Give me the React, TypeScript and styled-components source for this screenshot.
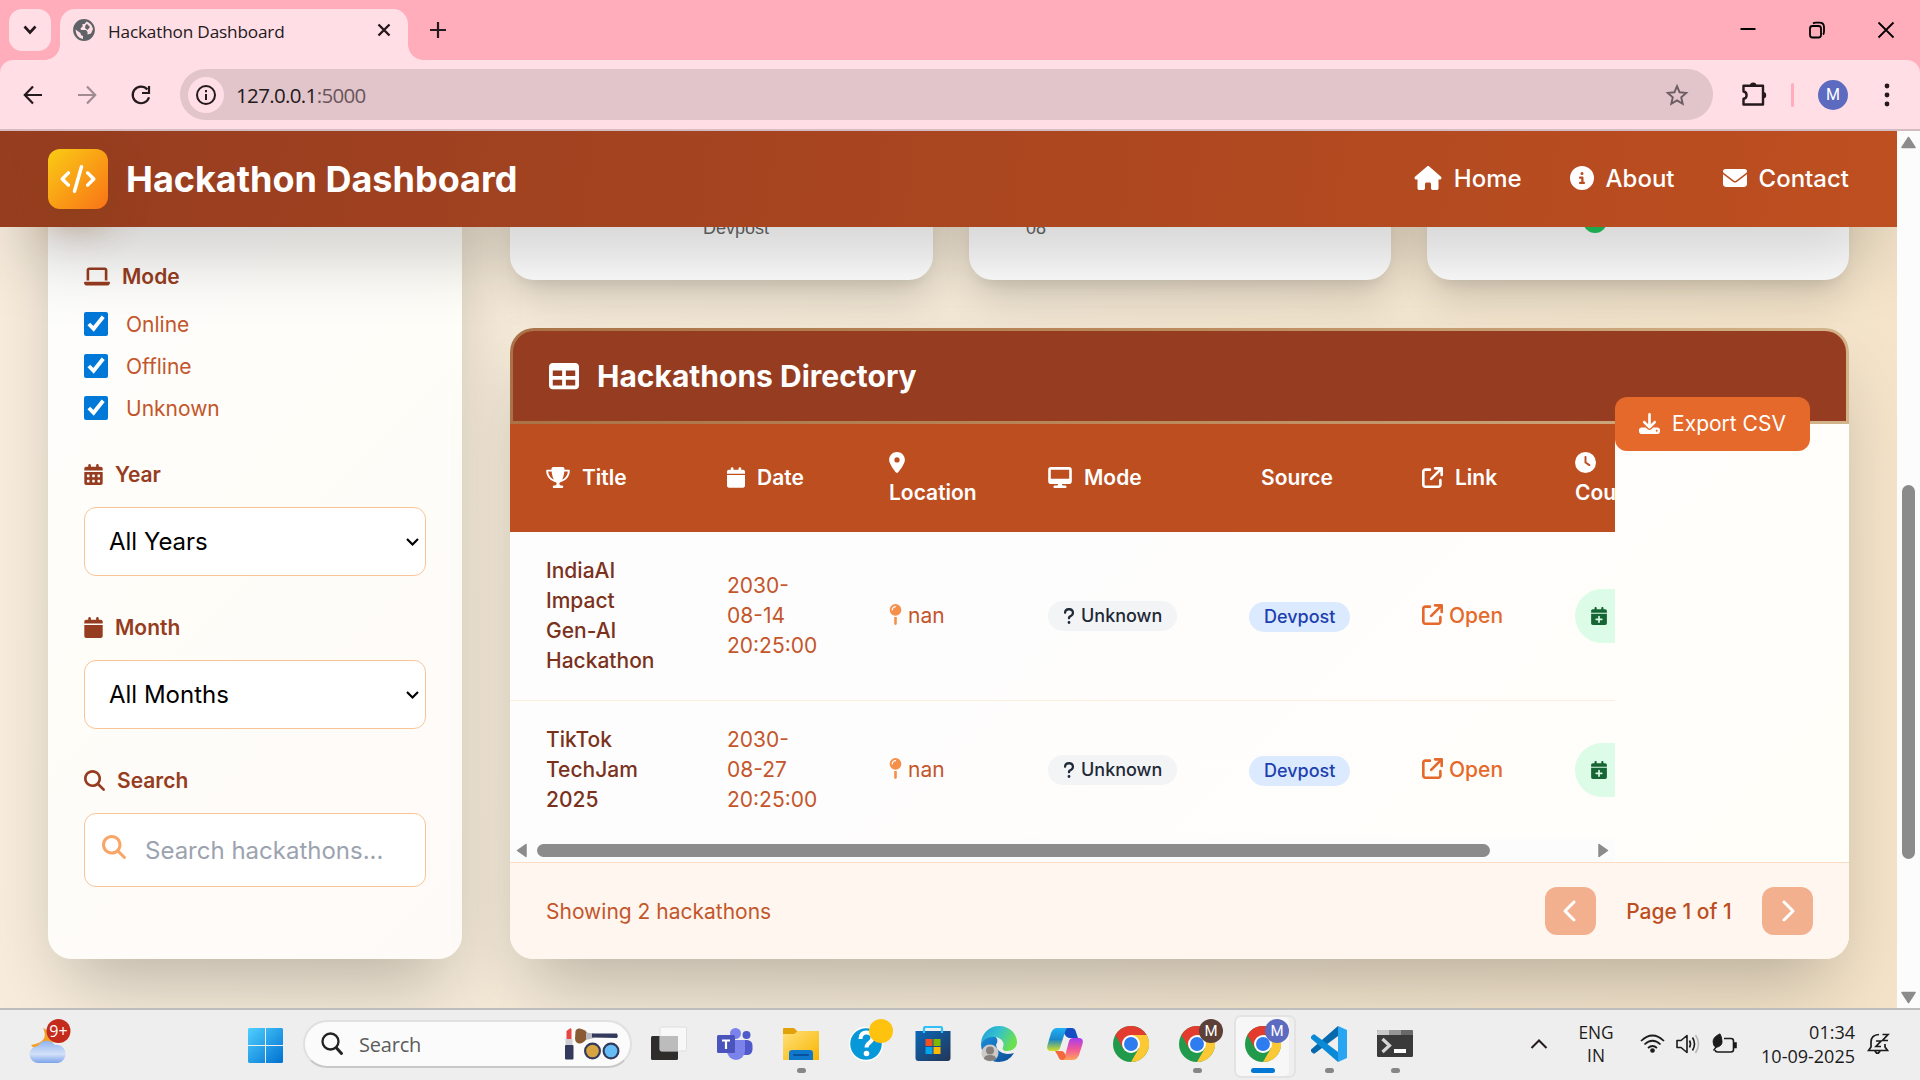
import React from "react";
import styled, { createGlobalStyle, css } from "styled-components";
import {
  FaHouse, FaCircleInfo, FaEnvelope, FaCode, FaLaptop, FaCalendarDays, FaCalendar,
  FaMagnifyingGlass, FaTrophy, FaLocationDot, FaDesktop, FaArrowUpRightFromSquare,
  FaClock, FaQuestion, FaCalendarPlus, FaMapPin, FaTable, FaDownload, FaChevronLeft, FaChevronRight,
} from "react-icons/fa6";

const ui = `"Open Sans", "Noto Sans", sans-serif`;
const rust = "#963c20";
const ember = "#bd4e20";
const flame = "#e5692b";

const Global = createGlobalStyle`
  * { box-sizing: border-box; }
  body { margin: 0; overflow: hidden; font-family: Inter, "Liberation Sans", sans-serif; }
  svg { display: block; flex: none; }
`;

const Screen = styled.div`
  width: 1920px;
  height: 1080px;
  display: flex;
  flex-direction: column;
  overflow: hidden;
`;

/* ---------- browser chrome ---------- */
const TabStrip = styled.div`
  height: 60px;
  flex: none;
  background: #ffadbb;
  display: flex;
  align-items: flex-start;
  padding: 9px 0 0 9px;
`;
const TabSearch = styled.div`
  width: 42px;
  height: 42px;
  border-radius: 13px;
  background: #ffdee5;
  display: grid;
  place-items: center;
  margin-right: 9px;
`;
const Tab = styled.div`
  position: relative;
  width: 348px;
  height: 51px;
  border-radius: 15px 15px 0 0;
  background: #ffdee5;
  display: flex;
  align-items: center;
  padding: 0 17px 9px 13px;
  &::before, &::after {
    content: "";
    position: absolute;
    bottom: 0;
    width: 15px;
    height: 15px;
  }
  &::before { left: -15px; background: radial-gradient(circle at 0 0, transparent 14.5px, #ffdee5 15px); }
  &::after { right: -15px; background: radial-gradient(circle at 100% 0, transparent 14.5px, #ffdee5 15px); }
`;
const TabTitle = styled.span`
  flex: 1;
  margin: 4px 0 0 13px;
  font: 400 17.2px/24px ${ui};
  letter-spacing: -0.17px;
  color: #24191c;
  white-space: nowrap;
`;
const NewTab = styled.div`
  margin: 12px 0 0 21px;
`;
const WindowControls = styled.div`
  margin: 12px 25px 0 auto;
  display: flex;
  gap: 51px;
`;
const ToolbarBack = styled.div`
  background: #ffadbb;
  flex: none;
`;
const Toolbar = styled.div`
  height: 71px;
  background: #ffdee5;
  border-radius: 13px 13px 0 0;
  border-bottom: 2px solid #d4bcc3;
  display: flex;
  align-items: center;
  padding: 0 24px 0 21px;
`;
const NavButtons = styled.div`
  display: flex;
  gap: 30px;
  width: 159px;
`;
const Address = styled.div`
  width: 1533px;
  height: 51px;
  border-radius: 26px;
  background: #e1c5ca;
  display: flex;
  align-items: center;
  padding: 0 24px 0 8px;
`;
const SiteInfo = styled.div`
  width: 36px;
  height: 36px;
  border-radius: 50%;
  background: #ffdee5;
  display: grid;
  place-items: center;
`;
const Url = styled.div`
  flex: 1;
  margin-left: 12px;
  font: 400 20.5px/28px ${ui};
  letter-spacing: -0.65px;
  color: #24191c;
  span { color: #6a555b; }
`;
const ToolbarEnd = styled.div`
  flex: 1;
  display: flex;
  align-items: center;
  padding-left: 28px;
`;
const Separator = styled.i`
  width: 3px;
  height: 24px;
  border-radius: 2px;
  background: #ffadbb;
  margin: 0 24px 0 23px;
`;
const Avatar = styled.div`
  width: 30px;
  height: 30px;
  border-radius: 50%;
  background: #5c6bc0;
  color: #fff;
  font: 400 16px/30px Roboto, sans-serif;
  text-align: center;
  margin-right: 36px;
`;

/* ---------- page ---------- */
const Body = styled.div`
  height: 877px;
  flex: none;
  display: flex;
`;
const Viewport = styled.div`
  width: 1897px;
  overflow: hidden;
  background: linear-gradient(100deg, #f9eede 0%, #f3e8d5 50%, #f4e3c8 100%);
`;
const Header = styled.header`
  position: relative;
  z-index: 2;
  height: 96px;
  padding: 0 48px;
  display: flex;
  align-items: center;
  justify-content: space-between;
  background: linear-gradient(97deg, #963d20 0%, #be4f20 100%);
  box-shadow: 0 37.5px 75px -18px rgba(0, 0, 0, 0.25);
`;
const Brand = styled.div`
  display: flex;
  align-items: center;
  gap: 18px;
  font-size: 36px;
  font-weight: 700;
  line-height: 48px;
  color: #fff;
`;
const LogoBox = styled.div`
  width: 60px;
  height: 60px;
  border-radius: 12px;
  display: grid;
  place-items: center;
  background: linear-gradient(135deg, #facc15, #f97316);
  box-shadow: 0 15px 37px rgba(133, 66, 20, 0.45);
`;
const Nav = styled.nav`
  display: flex;
  gap: 48px;
  margin-bottom: 2px;
`;
const NavItem = styled.a`
  display: flex;
  align-items: center;
  gap: 12px;
  font-size: 24px;
  font-weight: 500;
  color: #fff;
`;
const Content = styled.main`
  display: flex;
  gap: 48px;
  margin: -60px 48px 0;
  align-items: stretch;
  height: 792px;
`;
const deepShadow = css`box-shadow: 0 37.5px 75px -18px rgba(0, 0, 0, 0.25);`;
const Sidebar = styled.aside`
  width: 414px;
  flex: none;
  border-radius: 24px;
  padding: 94px 36px 0;
  background: linear-gradient(135deg, #fdfdfd, #fefdf8 45%, #fefaf8);
  ${deepShadow}
`;
const Field = styled.section`
  margin-bottom: 36px;
`;
const Label = styled.h3`
  margin: 0 0 18px;
  height: 30px;
  display: flex;
  align-items: center;
  gap: 12px;
  font-size: 21px;
  font-weight: 600;
  color: ${rust};
`;
const Check = styled.label`
  display: flex;
  align-items: center;
  gap: 18px;
  height: 30px;
  margin-bottom: 12px;
  font-size: 21px;
  color: #c4562b;
  input { width: 24px; height: 24px; margin: 0; accent-color: #0078d7; }
`;
const Select = styled.div`
  height: 69px;
  border: 1px solid #f9c596;
  border-radius: 12px;
  background: #fff;
  display: flex;
  align-items: center;
  justify-content: space-between;
  padding: 0 5px 0 24px;
  font-size: 24px;
  color: #000;
`;
const SearchInput = styled.div`
  height: 74px;
  border: 1px solid #f9c596;
  border-radius: 12px;
  background: #fff;
  display: flex;
  align-items: center;
  gap: 19px;
  padding-left: 17px;
  font-size: 24px;
  color: #9ca3af;
  svg { color: #f9a566; margin-bottom: 7px; }
`;
const Column = styled.div`
  width: 1339px;
  display: flex;
  flex-direction: column;
  gap: 48px;
`;
const Stats = styled.div`
  display: grid;
  grid-template-columns: 423px 422px 422px;
  gap: 36px;
  height: 113px;
  font: 18px/20px "Liberation Sans", Arial, sans-serif;
  color: #666;
`;
const Stat = styled.div<{ $indent: number }>`
  border-radius: 24px;
  background: #fff;
  padding: 51px 0 0 ${(p) => p.$indent}px;
  box-shadow: 0 30px 37px -8px rgba(0, 0, 0, 0.1), 0 12px 15px -9px rgba(0, 0, 0, 0.1);
`;
const GreenDot = styled.i`
  display: block;
  width: 24px;
  height: 24px;
  border-radius: 50%;
  background: #22c55e;
  margin-top: -9px;
`;
const Directory = styled.section`
  flex: 1;
  border-radius: 24px;
  display: flex;
  flex-direction: column;
  background: linear-gradient(135deg, #fefdfd 40%, #fffef8);
  ${deepShadow}
`;
const DirectoryFrame = styled.div`
  position: relative;
  height: 96px;
  padding: 3px;
  border-radius: 24px 24px 0 0;
  background: linear-gradient(90deg, #a97347, #bb8a5d 50%, #d3b48a);
`;
const DirectoryHead = styled.div`
  height: 90px;
  border-radius: 21px 21px 0 0;
  background: ${rust};
  display: flex;
  align-items: center;
  gap: 18px;
  padding: 0 0 0 36px;
  color: #fff;
  font-size: 30px;
  font-weight: 700;
`;
const ExportButton = styled.button`
  position: absolute;
  right: 39px;
  top: 69px;
  width: 195px;
  height: 54px;
  border: 0;
  border-radius: 12px;
  background: ${flame};
  color: #fff;
  font: 400 21px Inter, sans-serif;
  display: flex;
  align-items: center;
  justify-content: center;
  gap: 12px;
  padding: 0 6px 1px;
`;
const TableWrap = styled.div`
  width: 1105px;
  height: 438px;
  overflow: hidden;
`;
const Table = styled.table`
  width: 1230px;
  height: 415px;
  table-layout: fixed;
  border-collapse: collapse;
  font-size: 21px;
  line-height: 30px;
  color: #c4562b;
  svg { display: inline-block; vertical-align: -2.6px; }
`;
const Th = styled.th`
  background: ${ember};
  color: #fff;
  text-align: left;
  font-weight: 600;
  height: 108px;
  padding: 24px 36px;
  svg { margin-right: 12px; }
`;
const Tr = styled.tr<{ $h: number }>`
  height: ${(p) => p.$h}px;
  & + & { border-top: 1.5px solid #fdeedd; }
`;
const Td = styled.td<{ $title?: boolean }>`
  padding: 0 0 0 36px;
  white-space: nowrap;
  ${(p) => p.$title && css`color: #7a321c; font-weight: 500;`}
`;
const Line = styled.span`
  display: block;
`;
const Pill = styled.span<{ $tone: "gray" | "blue" }>`
  display: inline-flex;
  align-items: center;
  vertical-align: middle;
  height: 30px;
  border-radius: 15px;
  padding: 0 15px;
  font-size: 18px;
  font-weight: 500;
  ${(p) => p.$tone === "gray"
    ? css`background: #f3f4f6; color: #1f2937; svg { margin-right: 6px; }`
    : css`background: #dbeafe; color: #1e40af; margin-top: 2px;`}
`;
const OpenLink = styled.a`
  color: ${flame};
  font-weight: 500;
  svg { margin-right: 6px; }
`;
const CountPill = styled.span`
  display: flex;
  align-items: center;
  gap: 12px;
  width: 150px;
  height: 54px;
  border-radius: 27px;
  padding-left: 15px;
  background: #dcfce7;
  color: #166534;
`;
const HScroll = styled.div`
  height: 23px;
  display: flex;
  align-items: center;
  padding: 0 6px 0 6px;
  background: #fcfcfd;
  i { width: 953px; height: 13px; border-radius: 7px; background: #8b8b8b; margin: 0 auto 0 9px; }
`;
const Footer = styled.footer`
  flex: 1;
  border-top: 1.5px solid #fbdcc3;
  border-radius: 0 0 24px 24px;
  background: #fff6f0;
  display: flex;
  align-items: center;
  justify-content: space-between;
  padding: 0 36px;
  font-size: 21px;
  color: #c4562b;
`;
const Pager = styled.div`
  display: flex;
  align-items: center;
  justify-content: space-between;
  width: 268px;
  font-weight: 500;
  color: ${ember};
`;
const PageButton = styled.span`
  width: 51px;
  height: 48px;
  border-radius: 12px;
  background: #f2b08e;
  color: #fff;
  display: grid;
  place-items: center;
`;
const VScroll = styled.div`
  width: 23px;
  background: #fcfcfc;
  display: flex;
  flex-direction: column;
  align-items: center;
  padding: 5px 0 4px;
  i { width: 13px; height: 374px; border-radius: 7px; background: #8b8b8b; margin: 336px 0 auto; }
`;

/* ---------- taskbar ---------- */
const Taskbar = styled.div`
  height: 72px;
  flex: none;
  border-top: 2px solid #bdbdbf;
  background: #eeeeee;
  display: flex;
  align-items: center;
  font-family: ${ui};
  color: #1b1b1b;
`;
const Weather = styled.div`
  width: 248px;
  padding: 0 0 8px 28px;
`;
const TaskSearch = styled.div`
  width: 329px;
  height: 48px;
  margin: 0 4px 2px 20px;
  border: 2px solid #e0e0e0;
  border-bottom-color: #c8c8c8;
  border-radius: 24px;
  background: #fbfbfb;
  display: flex;
  align-items: center;
  padding: 0 10px 0 15px;
  font-size: 20px;
  color: #5c5c5c;
  span { margin-left: 15px; flex: 1; letter-spacing: -0.2px; }
`;
const TaskItem = styled.div<{ $active?: boolean }>`
  position: relative;
  width: 66px;
  height: 70px;
  display: grid;
  place-items: center;
  padding-bottom: 2px;
  ${(p) => p.$active && css`
    &::before {
      content: "";
      position: absolute;
      left: 4px;
      top: 5px;
      width: 58px;
      height: 59px;
      border: 2px solid #e3e3e3;
      border-radius: 7px;
      background: #f7f7f7;
      box-shadow: inset -5px 0 0 #efefef;
    }
  `}
  svg { position: relative; }
`;
const Running = styled.i<{ $active?: boolean }>`
  position: absolute;
  bottom: 7px;
  left: ${(p) => (p.$active ? 21 : 28.5)}px;
  width: ${(p) => (p.$active ? 24 : 9)}px;
  height: 5px;
  border-radius: 3px;
  background: ${(p) => (p.$active ? "#0078d4" : "#868686")};
`;
const Badge = styled.b<{ $color: string }>`
  position: absolute;
  right: 7px;
  top: 9px;
  width: 24px;
  height: 24px;
  border-radius: 50%;
  background: ${(p) => p.$color};
  color: #fff;
  font: 400 15px/24px Roboto, sans-serif;
  text-align: center;
`;
const Tray = styled.div`
  margin: 0 0 2px auto;
  padding-right: 30px;
  display: flex;
  align-items: center;
`;
const Lang = styled.div`
  width: 60px;
  margin: 0 14px 0 18px;
  text-align: center;
  font-size: 17.3px;
  line-height: 23px;
`;
const Clock = styled.div`
  width: 118px;
  text-align: right;
  margin-right: 12px;
  font-size: 18px;
  line-height: 24px;
  white-space: nowrap;
`;
const TrayIcons = styled.div`
  display: flex;
  align-items: center;
  gap: 11px;
`;

const Stroke = ({ w, h, d, c = "#24191c", s = 2.2 }: { w: number; h: number; d: string; c?: string; s?: number }) => (
  <svg width={w} height={h} viewBox={`0 0 ${w} ${h}`} fill="none" stroke={c} strokeWidth={s}>
    <path d={d} />
  </svg>
);

const Arrow = ({ dir }: { dir: "up" | "down" | "left" | "right" }) => {
  const vertical = dir === "up" || dir === "down";
  const pts = { up: "7.5,1.5 14,11.5 1,11.5", down: "7.5,11.5 14,1.5 1,1.5", left: "1.5,7.5 10,1.5 10,13.5", right: "10.5,7.5 2,1.5 2,13.5" }[dir];
  return (
    <svg width={vertical ? 15 : 12} height={vertical ? 13 : 15}>
      <polygon points={pts} fill="#8b8b8b" stroke="#8b8b8b" strokeWidth="1.5" strokeLinejoin="round" />
    </svg>
  );
};

const ChromeIcon = () => (
  <svg width="36" height="36" viewBox="0 0 48 48">
    <circle cx="24" cy="24" r="24" fill="#229a4c" />
    <path d="M34.4 30 24 48A24 24 0 0 0 44.8 12H24Z" fill="#fcc934" />
    <path d="M3.2 12A24 24 0 0 1 44.8 12H24L13.600 30Z" fill="#e33b2e" />
    <circle cx="24" cy="24" r="12" fill="#fff" />
    <circle cx="24" cy="24" r="9.3" fill="#2f7cf0" />
  </svg>
);

const rows = [
  { title: ["IndiaAI", "Impact", "Gen-AI", "Hackathon"], date: ["2030-", "08-14", "20:25:00"], h: 168 },
  { title: ["TikTok", "TechJam", "2025"], date: ["2030-", "08-27", "20:25:00"], h: 139 },
];

const Browser = () => (
  <>
    <TabStrip>
      <TabSearch><Stroke w={14} h={10} d="M1.5 1.5 7 7.5l5.500-6" s={2.6} /></TabSearch>
      <Tab>
        <svg width="22" height="22" viewBox="0 0 22 22">
          <circle cx="11" cy="11" r="9.8" fill="#5f6368" stroke="#5f6368" strokeWidth="2.2" />
          <path d="M13.500 2.500 11.500 5H9.500v2.500L7.500 9.500 8 11h5l1.500 2v2.500L18 14.500 20 10Q19 4.500 13.500 2.500Z" fill="#ffdee5" />
          <path d="M13.800 4.800 17 8l-2.500 3-2.500-2 .5-2.500Z" fill="#5f6368" />
          <path d="M2.500 10.500 7.500 14l.5 2 2 1v3Q3 19 2.500 10.500Z" fill="#ffdee5" />
        </svg>
        <TabTitle>Hackathon Dashboard</TabTitle>
        <Stroke w={14} h={14} d="M1.500 1.500l11 11M12.500 1.500l-11 11" s={2.4} />
      </Tab>
      <NewTab><Stroke w={18} h={18} d="M9 1v16M1 9h16" s={2.2} /></NewTab>
      <WindowControls>
        <Stroke w={18} h={18} d="M1.500 8h15" c="#000" s={2} />
        <svg width="18" height="18" viewBox="0 0 18 18" fill="none" stroke="#000" strokeWidth="1.8">
          <rect x="2" y="5" width="11" height="11.500" rx="2.500" />
          <path d="M5 2.500Q6 1.600 8 1.600h3.500Q16 1.600 16 6v4.500Q16 12.500 15 13.500" />
        </svg>
        <Stroke w={18} h={18} d="M1.500 1.500l15 15M16.500 1.500l-15 15" c="#000" s={1.8} />
      </WindowControls>
    </TabStrip>
    <ToolbarBack>
      <Toolbar>
        <NavButtons>
          <Stroke w={24} h={24} d="M21 12H4.500M12 3.500 3.800 12l8.200 8.500" />
          <Stroke w={24} h={24} d="M3 12h16.500M12 3.500l8.200 8.500-8.200 8.500" c="#a08b91" />
          <Stroke w={24} h={24} d="M20 14.200A8.300 8.300 0 1 1 18.300 6.500M20 3v7h-7" />
        </NavButtons>
        <Address>
          <SiteInfo>
            <svg width="22" height="22" viewBox="0 0 22 22" fill="none" stroke="#24191c" strokeWidth="2">
              <circle cx="11" cy="11" r="9" /><path d="M11 10v6M11 6v2.200" />
            </svg>
          </SiteInfo>
          <Url>127.0.0.1<span>:5000</span></Url>
          <svg width="24" height="24" viewBox="0 0 24 24" fill="none" stroke="#6b5d61" strokeWidth="1.900">
            <path d="m12 3.200 2.600 6.100 6.600.6-5 4.400 1.500 6.500-5.700-3.400-5.700 3.400 1.500-6.500-5-4.400 6.600-.6Z" />
          </svg>
        </Address>
        <ToolbarEnd>
          <svg width="27" height="27" viewBox="0 0 27 27" fill="none" stroke="#24191c" strokeWidth="2.400">
            <path d="M2.500 4.700H22V23.500H2.500v-5.700a3.700 3.700 0 0 0 0-7.300Z" strokeLinejoin="round" />
            <path d="M9 4.700a3.200 3.200 0 0 1 6.400 0ZM22 11a3.200 3.200 0 0 1 0 6.400Z" fill="#24191c" stroke="none" />
          </svg>
          <Separator />
          <Avatar>M</Avatar>
          <svg width="6" height="26" fill="#24191c"><circle cx="3" cy="4" r="2.400" /><circle cx="3" cy="13" r="2.400" /><circle cx="3" cy="22" r="2.400" /></svg>
        </ToolbarEnd>
      </Toolbar>
    </ToolbarBack>
  </>
);

const DirectoryTable = () => (
  <TableWrap>
    <Table>
      <colgroup>
        {[181, 162, 159, 201, 173, 153, 201].map((w, i) => <col key={i} width={w} />)}
      </colgroup>
      <thead>
        <tr>
          <Th><FaTrophy size={21} style={{ width: 24 }} />Title</Th>
          <Th><FaCalendar size={21} style={{ width: 18 }} />Date</Th>
          <Th><FaLocationDot size={21} style={{ width: 16 }} /> Location</Th>
          <Th><FaDesktop size={21} style={{ width: 24 }} />Mode</Th>
          <Th><span style={{ paddingLeft: 12 }}>Source</span></Th>
          <Th><FaArrowUpRightFromSquare size={21} />Link</Th>
          <Th><FaClock size={21} /> Countdown</Th>
        </tr>
      </thead>
      <tbody>
        {rows.map((r) => (
          <Tr key={r.title[0]} $h={r.h}>
            <Td $title>{r.title.map((t) => <Line key={t}>{t}</Line>)}</Td>
            <Td>{r.date.map((t) => <Line key={t}>{t}</Line>)}</Td>
            <Td><FaMapPin size={21} color="#f58f4a" style={{ width: 13, marginRight: 6 }} />nan</Td>
            <Td><Pill $tone="gray"><FaQuestion size={18} style={{ width: 12 }} />Unknown</Pill></Td>
            <Td><Pill $tone="blue">Devpost</Pill></Td>
            <Td><OpenLink><FaArrowUpRightFromSquare size={21} />Open</OpenLink></Td>
            <Td><CountPill><FaCalendarPlus size={18} /></CountPill></Td>
          </Tr>
        ))}
      </tbody>
    </Table>
    <HScroll><Arrow dir="left" /><i /><Arrow dir="right" /></HScroll>
  </TableWrap>
);

const SelectChevron = () => <Stroke w={15} h={10} d="M2 2l5.500 5.500L13 2" c="#000" s={2.200} />;

const Page = () => (
  <Body>
    <Viewport>
      <Header>
        <Brand>
          <LogoBox><FaCode size={28} style={{ width: 36 }} /></LogoBox>
          Hackathon Dashboard
        </Brand>
        <Nav>
          <NavItem><FaHouse size={24} style={{ width: 28 }} />Home</NavItem>
          <NavItem><FaCircleInfo size={24} />About</NavItem>
          <NavItem><FaEnvelope size={24} />Contact</NavItem>
        </Nav>
      </Header>
      <Content>
        <Sidebar>
          <Field>
            <Label><FaLaptop size={21} style={{ width: 26 }} />Mode</Label>
            {["Online", "Offline", "Unknown"].map((m) => (
              <Check key={m}><input type="checkbox" defaultChecked />{m}</Check>
            ))}
          </Field>
          <Field>
            <Label><FaCalendarDays size={21} style={{ width: 19 }} />Year</Label>
            <Select>All Years<SelectChevron /></Select>
          </Field>
          <Field>
            <Label><FaCalendar size={21} style={{ width: 19 }} />Month</Label>
            <Select>All Months<SelectChevron /></Select>
          </Field>
          <Field>
            <Label><FaMagnifyingGlass size={21} />Search</Label>
            <SearchInput><FaMagnifyingGlass size={24} />Search hackathons...</SearchInput>
          </Field>
        </Sidebar>
        <Column>
          <Stats>
            <Stat $indent={193}>Devpost</Stat>
            <Stat $indent={57}>08</Stat>
            <Stat $indent={156}><GreenDot /></Stat>
          </Stats>
          <Directory>
            <DirectoryFrame>
              <DirectoryHead><FaTable size={30} />Hackathons Directory</DirectoryHead>
              <ExportButton><FaDownload size={21} />Export CSV</ExportButton>
            </DirectoryFrame>
            <DirectoryTable />
            <Footer>
              <span>Showing 2 hackathons</span>
              <Pager>
                <PageButton><FaChevronLeft size={24} /></PageButton>
                Page 1 of 1
                <PageButton><FaChevronRight size={24} /></PageButton>
              </Pager>
            </Footer>
          </Directory>
        </Column>
      </Content>
    </Viewport>
    <VScroll><Arrow dir="up" /><i /><Arrow dir="down" /></VScroll>
  </Body>
);

const Bar = () => (
  <Taskbar>
    <Weather>
      <svg width="46" height="46" viewBox="0 0 46 46">
        <defs>
          <linearGradient id="cloud" x2="0" y2="1"><stop stopColor="#8fb4f0" /><stop offset=".6" stopColor="#d3e1f8" /><stop offset="1" stopColor="#7ca3ea" /></linearGradient>
        </defs>
        <path d="M15 10q7 14-12 17 3 5 12 5l10-8Q22 12 15 10Z" fill="#f4a024" />
        <path d="M11 45a9 8.500 0 0 1-1-17 10 10 0 0 1 17-1 9 9 0 0 1 3 18Z" fill="url(#cloud)" />
        <circle cx="30.500" cy="13" r="12" fill="#c42b1c" />
        <text x="30.500" y="18.500" fontSize="16" textAnchor="middle" fill="#fff" fontFamily="Open Sans">9+</text>
      </svg>
    </Weather>
    <svg width="35" height="35" viewBox="0 0 35 35">
      <defs><linearGradient id="win" x2="1" y2="1"><stop stopColor="#4fd0ff" /><stop offset="1" stopColor="#0070d0" /></linearGradient></defs>
      <path d="M1 0h16v17H0V1Zm17 0h16l1 1v16H18ZM0 18h17v17H1l-1-1Zm18 0h17v16l-1 1H18Z" fill="url(#win)" />
    </svg>
    <TaskSearch>
      <svg width="24" height="26" viewBox="0 0 24 26" fill="none" stroke="#222" strokeLinecap="round">
        <circle cx="10.500" cy="10.500" r="8" strokeWidth="2.300" /><path d="m16.500 17 5 5.500" strokeWidth="3" />
      </svg>
      <span>Search</span>
      <svg width="57" height="34" viewBox="0 0 57 34">
        <path d="M3.500 13V4l4-3 1 1.500V13Z" fill="#e84545" /><rect x="2.500" y="12" width="7" height="8" fill="#d0cdd4" /><rect x="2" y="18" width="8.500" height="14.500" rx="1" fill="#343a5c" />
        <path d="M12.500 4q1-3 4-2.500 6 1 8 5v4q-3 5-7 6-5 .5-5.500-5Z" fill="#8a5a34" /><path d="m23 5.500 8 1v4.500l-8 2Z" fill="#b9b9c4" /><path d="M29 6.500 54 6.500q1.500 2 0 4.500l-25-.5Z" fill="#343a5c" />
        <circle cx="29.500" cy="24" r="8.500" fill="#343a5c" /><circle cx="29.500" cy="24" r="6.300" fill="#d7a440" /><circle cx="48" cy="24" r="8.500" fill="#343a5c" /><circle cx="48" cy="24" r="6.300" fill="#66bdf5" />
      </svg>
    </TaskSearch>
    <TaskItem>
      <svg width="36" height="36" viewBox="0 0 36 36"><rect x="0" y="10" width="27" height="24" rx="1.500" fill="#2e2d2c" /><rect x="9" y="1" width="26.500" height="24" rx="1.500" fill="#f8f8f8" stroke="#dedede" /><path d="M9 10h18v15H9Z" fill="#bcbcbc" /></svg>
    </TaskItem>
    <TaskItem>
      <svg width="36" height="34" viewBox="0 0 36 34">
        <circle cx="29.500" cy="8" r="4" fill="#5059c9" /><rect x="23" y="13" width="12.500" height="15" rx="5.500" fill="#5059c9" />
        <circle cx="18.500" cy="6.500" r="5.500" fill="#7b83eb" /><path d="M10 13h18v11a9 9 0 0 1-18 0Z" fill="#7b83eb" />
        <rect y="8" width="18" height="18" rx="1.500" fill="#4b53bc" /><path d="M5 13.500h8M9 13.500V22" stroke="#fff" strokeWidth="2.200" />
      </svg>
    </TaskItem>
    <TaskItem>
      <svg width="36" height="34" viewBox="0 0 36 34">
        <defs><linearGradient id="fold" x2="1" y2="1"><stop stopColor="#ffe07a" /><stop offset="1" stopColor="#f8b500" /></linearGradient></defs>
        <path d="M0 2q0-1 1-1h10l4 4H36v5H0Z" fill="#e2a108" /><path d="M0 7h11l4-3h21v29H0Z" fill="url(#fold)" /><path d="M6 33v-7q0-3 3-3h18q3 0 3 3v7Z" fill="#0e79cc" /><path d="M11 28h14" stroke="#07509c" strokeWidth="2" strokeLinecap="round" />
      </svg>
      <Running />
    </TaskItem>
    <TaskItem>
      <svg width="36" height="36" viewBox="0 0 36 36"><circle cx="17" cy="18" r="16.500" fill="#0698d8" stroke="#fff" strokeWidth="1.500" /><path d="M11.500 13q0-6.500 6-6.500t6 5.500c0 4.500-6 4.500-6 9.500" fill="none" stroke="#fff" strokeWidth="4" /><circle cx="17.500" cy="27.500" r="2.800" fill="#fff" /></svg>
      <Badge $color="#fec20f" />
    </TaskItem>
    <TaskItem>
      <svg width="36" height="36" viewBox="0 0 36 36">
        <defs><linearGradient id="store" x2="1" y2="1"><stop stopColor="#0967b8" /><stop offset="1" stopColor="#243557" /></linearGradient></defs>
        <path d="M9 8V2.500Q9 1 10.500 1h15Q27 1 27 2.500V8" fill="none" stroke="#2fc0f5" strokeWidth="2.200" />
        <path d="M.5 5h35v27q0 3-3 3h-29q-3 0-3-3Z" fill="url(#store)" /><path d="M9 5v2M27 5v2" stroke="#2fc0f5" strokeWidth="2.200" />
        <path d="M10.500 13h7v7h-7Z" fill="#f25022" /><path d="M18.500 13h7v7h-7Z" fill="#7fba00" /><path d="M10.500 21h7v7h-7Z" fill="#00a4ef" /><path d="M18.500 21h7v7h-7Z" fill="#ffb900" />
      </svg>
    </TaskItem>
    <TaskItem>
      <svg width="36" height="36" viewBox="0 0 36 36">
        <defs>
          <linearGradient id="edgeA" x2="1" y2=".4"><stop stopColor="#1f9ad9" /><stop offset=".5" stopColor="#35c1cf" /><stop offset="1" stopColor="#6be04f" /></linearGradient>
          <linearGradient id="edgeB" x2="1" y2="1"><stop stopColor="#1b8fdd" /><stop offset="1" stopColor="#0c4a94" /></linearGradient>
        </defs>
        <path d="M0 18Q2 8 12 10q7 2 3 9 1 8 11 9 4 0 7-1a18 18 0 0 1-15 9A18 18 0 0 1 0 18Z" fill="url(#edgeB)" />
        <path d="M0 18A18 18 0 0 1 18 0C29 0 36 8 36 16c0 6-5 9-10 9-4 0-5-2-4-4 2-4-1-9-8-10Q4 10 0 18Z" fill="url(#edgeA)" />
        <circle cx="9" cy="27" r="8.500" fill="#cdcac8" /><circle cx="9" cy="24.500" r="4" fill="#85807d" /><path d="M3 33q0-4 6-4t6 4q-6 4-12 0Z" fill="#85807d" />
      </svg>
    </TaskItem>
    <TaskItem>
      <svg width="36" height="34" viewBox="0 0 36 34">
        <defs>
          <linearGradient id="copA" x2="0" y2="1"><stop stopColor="#1fb0f5" /><stop offset=".5" stopColor="#1a88c8" /><stop offset="1" stopColor="#d5e021" /></linearGradient>
          <linearGradient id="copB" x2="0" y2="1"><stop stopColor="#a83df0" /><stop offset=".5" stopColor="#f0559a" /><stop offset="1" stopColor="#ffa45a" /></linearGradient>
        </defs>
        <path d="M16 1h9q3 0 4 4l2 6h-8q-4 0-6-5Z" fill="#164fc4" />
        <path d="M10 1h11q-2 0-3 4l-5 16q-1 3-4 3H4q-5 0-3.500-6L4 6q2-5 6-5Z" fill="url(#copA)" />
        <path d="M26 33H14q3 0 4-4l4-15q1-3 4-3h6q5 0 3.500 6L32 28q-2 5-6 5Z" fill="url(#copB)" />
        <path d="M8 24h6q3 0 4 3l1 2q-1 4-4 4-3 0-4-4Z" fill="#f26a3c" />
      </svg>
    </TaskItem>
    <TaskItem><ChromeIcon /></TaskItem>
    <TaskItem><ChromeIcon /><Badge $color="#5d4037">M</Badge><Running /></TaskItem>
    <TaskItem $active><ChromeIcon /><Badge $color="#5c6bc0">M</Badge><Running $active /></TaskItem>
    <TaskItem>
      <svg width="36" height="36" viewBox="0 0 36 36">
        <path d="M27 0 0 23.500q-.5 1.500.5 2.500L2 27.300q1 .7 2 0L27 10Z" fill="#0669ac" />
        <path d="M27 36 0 12.500q-.5-1.500.5-2.500L2 8.700q1-.7 2 0L27 26Z" fill="#0a8ad6" />
        <path d="M27 0 36 4v28l-9 4Z" fill="#27a5f3" />
      </svg>
      <Running />
    </TaskItem>
    <TaskItem>
      <svg width="36" height="28" viewBox="0 0 36 28"><rect width="36" height="27" rx="1.500" fill="#3a3a3a" /><path d="M0 5V1.500Q0 0 1.500 0H12v5Z" fill="#c8c8c8" /><path d="M12 0h12v5H12Z" fill="#969696" /><path d="M24 0h10.500Q36 0 36 1.500V5H24Z" fill="#686868" /><path d="m5.500 9 7 6.500-7 6.500" fill="none" stroke="#d6d6d6" strokeWidth="3.200" /><path d="M17 21h12" stroke="#fff" strokeWidth="4" /></svg>
      <Running />
    </TaskItem>
    <Tray>
      <Stroke w={18} h={12} d="M1.500 10 9 2.500l7.500 7.500" s={2} />
      <Lang>ENG<br />IN</Lang>
      <TrayIcons>
        <svg width="25" height="20" viewBox="0 0 25 20" fill="none" stroke="#1b1b1b" strokeWidth="1.700">
          <path d="M1 7q11.500-11 23 0M4.500 10.500q8-7.500 16 0M8 14q4.500-4 9 0" /><circle cx="12.500" cy="16.500" r="1.500" fill="#1b1b1b" />
        </svg>
        <svg width="25" height="22" viewBox="0 0 25 22" fill="none" stroke="#1b1b1b" strokeWidth="1.600">
          <path d="M1 7.500h4l6-5v17l-6-5H1Z" strokeLinejoin="round" /><path d="M13.500 7.500q2 3.500 0 7M16.500 4.500q4 6.500 0 13" /><path d="M19.500 2q6 9 0 18" stroke="#b8b8b8" />
        </svg>
        <svg width="25" height="22" viewBox="0 0 25 22" fill="none" stroke="#1b1b1b" strokeWidth="1.600">
          <path d="M12 5.500h7q2.500 0 2.500 2.500v8.500q0 2.500-2.500 2.500H5.500q-2 0-2.500-2" /><path d="M22 10h2v4.500h-2Z" fill="#1b1b1b" />
          <path d="M8 .8Q1 4 1 8.500T4 14.500q7-1.500 6-7Q9.500 3 8 .8Z" fill="#1b1b1b" strokeWidth=".8" /><path d="m1.500 17.500 4-5.500" strokeWidth="1.300" />
        </svg>
      </TrayIcons>
      <Clock>01:34<br />10-09-2025</Clock>
      <svg width="23" height="24" viewBox="0 0 23 24" fill="none" stroke="#1b1b1b" strokeWidth="1.700">
        <path d="M12 2.500Q4 3 4 10v5l-2.500 3.500h19L18 15v-3M8 19q2.500 4.500 5 0" /><path d="M9 9h5l-5 5.500h5M15.500 2.500H21l-5.500 6H21" />
      </svg>
    </Tray>
  </Taskbar>
);

export default function App() {
  return (
    <Screen>
      <Global />
      <Browser />
      <Page />
      <Bar />
    </Screen>
  );
}
